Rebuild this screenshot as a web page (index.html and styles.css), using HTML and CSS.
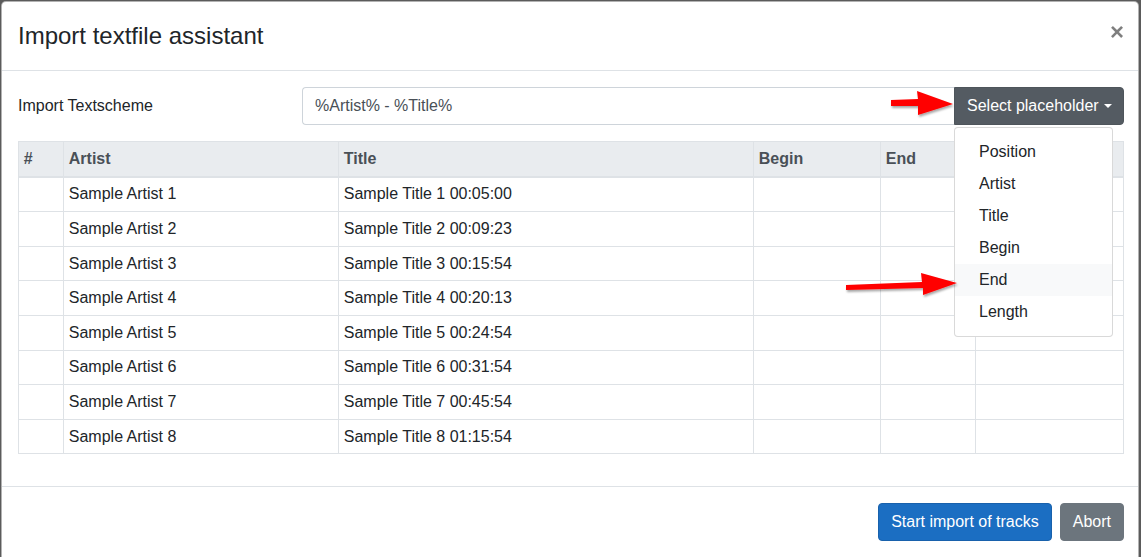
FILE: index.html
```html
<!DOCTYPE html>
<html>
<head>
<meta charset="utf-8">
<link rel="stylesheet" href="styles.css">
</head>
<body>
<div class="backdrop">
  <div class="modal">
    <div class="modal-header">
      <h4 class="modal-title">Import textfile assistant</h4>
      <button class="close">×</button>
    </div>
    <div class="modal-body">
      <div class="form-row">
        <label class="form-label">Import Textscheme</label>
        <div class="input-group">
          <input class="form-control" type="text" value="%Artist% - %Title%">
          <div class="dropdown">
            <button class="btn btn-dark-secondary">Select placeholder <span class="caret"></span></button>
            <div class="dropdown-menu">
              <div class="dropdown-item">Position</div>
              <div class="dropdown-item">Artist</div>
              <div class="dropdown-item">Title</div>
              <div class="dropdown-item">Begin</div>
              <div class="dropdown-item active">End</div>
              <div class="dropdown-item">Length</div>
            </div>
          </div>
        </div>
      </div>
      <table class="table">
        <colgroup>
          <col class="c-pos"><col class="c-artist"><col class="c-title"><col class="c-begin"><col class="c-end"><col class="c-length">
        </colgroup>
        <thead>
          <tr><th>#</th><th>Artist</th><th>Title</th><th>Begin</th><th>End</th><th>Length</th></tr>
        </thead>
        <tbody>
          <tr><td></td><td>Sample Artist 1</td><td>Sample Title 1 00:05:00</td><td></td><td></td><td></td></tr>
          <tr><td></td><td>Sample Artist 2</td><td>Sample Title 2 00:09:23</td><td></td><td></td><td></td></tr>
          <tr><td></td><td>Sample Artist 3</td><td>Sample Title 3 00:15:54</td><td></td><td></td><td></td></tr>
          <tr><td></td><td>Sample Artist 4</td><td>Sample Title 4 00:20:13</td><td></td><td></td><td></td></tr>
          <tr><td></td><td>Sample Artist 5</td><td>Sample Title 5 00:24:54</td><td></td><td></td><td></td></tr>
          <tr><td></td><td>Sample Artist 6</td><td>Sample Title 6 00:31:54</td><td></td><td></td><td></td></tr>
          <tr><td></td><td>Sample Artist 7</td><td>Sample Title 7 00:45:54</td><td></td><td></td><td></td></tr>
          <tr><td></td><td>Sample Artist 8</td><td>Sample Title 8 01:15:54</td><td></td><td></td><td></td></tr>
        </tbody>
      </table>
    </div>
    <div class="modal-footer">
      <button class="btn btn-primary">Start import of tracks</button>
      <button class="btn btn-secondary">Abort</button>
    </div>

    <svg class="arrow arrow-1" width="72" height="30" viewBox="0 0 72 30">
      <defs>
        <filter id="sh" x="-20%" y="-30%" width="140%" height="160%">
          <feDropShadow dx="1" dy="2" stdDeviation="1.2" flood-color="#000" flood-opacity="0.35"/>
        </filter>
      </defs>
      <polygon filter="url(#sh)" fill="#ff0000" points="2,11 29,10 28,2 64,15 29,26 29,17 2,17"/>
    </svg>
    <svg class="arrow arrow-2" width="120" height="30" viewBox="0 0 120 30">
      <polygon filter="url(#sh)" fill="#ff0000" points="3,14 79,11 78,2 114,12 80,24 80,17 3,19"/>
    </svg>
  </div>
</div>
</body>
</html>
```

FILE: styles.css
```css
* { box-sizing: border-box; }
html, body {
  margin: 0;
  padding: 0;
  background: #5b5b5b;
  width: 1141px;
  height: 557px;
  overflow: hidden;
}
body {
  font-family: "Liberation Sans", Arial, sans-serif;
  font-size: 16px;
  line-height: 1.5;
  color: #212529;
}
.backdrop {
  padding: 1px 0 0 1px;
}
.modal {
  position: relative;
  width: 1138px;
  height: 560px;
  background: #fff;
  border: 1px solid rgba(0,0,0,.3);
  border-radius: 5px;
  display: flex;
  flex-direction: column;
}
.modal-header {
  display: flex;
  align-items: flex-start;
  justify-content: space-between;
  padding: 16px 13px 16px 16px;
  border-bottom: 1px solid #dee2e6;
}
.modal-title {
  margin: 0;
  font-size: 24px;
  font-weight: 400;
  line-height: 36px;
  color: #212529;
}
.close {
  background: none;
  border: 0;
  padding: 0;
  margin: 2px 1px 0 0;
  font-family: "Liberation Sans", Arial, sans-serif;
  font-size: 24px;
  font-weight: 700;
  line-height: 1;
  color: #000;
  opacity: .5;
}
.modal-body {
  padding: 16px 14px 16px 16px;
}
.form-row {
  display: flex;
  align-items: center;
  margin-bottom: 16px;
}
.form-label {
  width: 284px;
  flex: none;
}
.input-group {
  flex: 1;
  display: flex;
}
.form-control {
  flex: 1;
  height: 38px;
  padding: 6px 12px;
  font-family: "Liberation Sans", Arial, sans-serif;
  font-size: 16px;
  color: #495057;
  border: 1px solid #ced4da;
  border-right: 0;
  border-radius: 4px 0 0 4px;
  outline: none;
}
.dropdown {
  position: relative;
}
.btn {
  height: 38px;
  padding: 6px 12px;
  font-family: "Liberation Sans", Arial, sans-serif;
  font-size: 16px;
  line-height: 24px;
  color: #fff;
  border: 1px solid transparent;
  border-radius: 4px;
}
.btn-dark-secondary {
  background: #545b62;
  border-color: #4e555b;
  border-radius: 0 4px 4px 0;
  width: 170px;
  white-space: nowrap;
}
.caret {
  display: inline-block;
  vertical-align: 3px;
  margin-left: 1px;
  border-top: 4.8px solid #fff;
  border-left: 4.2px solid transparent;
  border-right: 4.2px solid transparent;
}
.dropdown-menu {
  position: absolute;
  top: 40px;
  left: 0;
  width: 159px;
  padding: 8px 0;
  background: #fff;
  border: 1px solid rgba(0,0,0,.15);
  border-radius: 4px;
  z-index: 5;
}
.dropdown-item {
  padding: 4px 24px;
  line-height: 24px;
  color: #212529;
}
.dropdown-item.active {
  background: #f8f9fa;
}
.table {
  width: 100%;
  border-collapse: collapse;
  table-layout: fixed;
  margin-bottom: 16px;
}
.c-pos { width: 45px; }
.c-artist { width: 275px; }
.c-title { width: 415px; }
.c-begin { width: 127px; }
.c-end { width: 95px; }
.table th, .table td {
  padding: 4.8px;
  border: 1px solid #dee2e6;
  text-align: left;
  vertical-align: top;
  line-height: 24px;
  height: 34.6px;
}
.table thead th {
  background: #e9ecef;
  color: #495057;
  font-weight: 700;
  border-bottom: 2px solid #dee2e6;
  height: 35px;
}
.modal-footer {
  border-top: 1px solid #dee2e6;
  display: flex;
  justify-content: flex-end;
  gap: 8px;
  padding: 16px 14px 16px 16px;
}
.btn-primary {
  background: #1b6ec2;
  border-color: #1861ac;
}
.btn-secondary {
  background: #6c757d;
  border-color: #6c757d;
}
.arrow {
  position: absolute;
  z-index: 10;
}
.arrow-1 {
  left: 887px;
  top: 87px;
}
.arrow-2 {
  left: 841px;
  top: 269px;
}
```
